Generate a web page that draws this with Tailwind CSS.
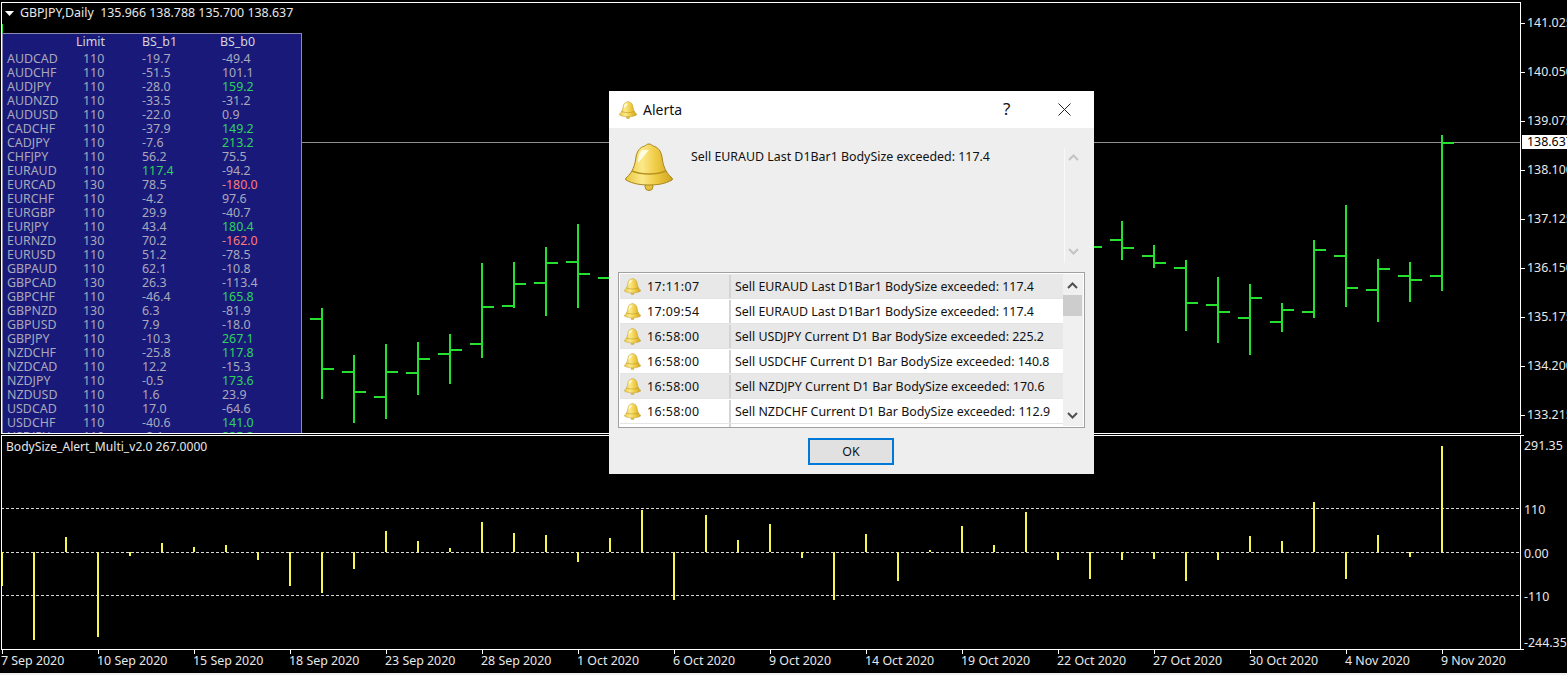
<!DOCTYPE html>
<html lang="en">
<head>
    <meta charset="UTF-8">
    <title>GBPJPY,Daily</title>
    <script src="https://cdn.jsdelivr.net/npm/@tailwindcss/browser@4"></script>
</head>
<body class="bg-black">
<div class="relative flex h-[675px] w-[1567px] flex-col overflow-hidden bg-black pt-[2px] font-['Noto_Sans',sans-serif] text-[12.4px] leading-[14px] text-[#e8e8e8]">

    <!-- bars and level lines, drawn in page coordinates -->
    <svg class="absolute left-0 top-0" width="1567" height="675" viewBox="0 0 1567 675" fill="none" shape-rendering="crispEdges">
        <path d="M302 142.5H1521" stroke="#8f8f8f"/>
        <path d="M1 508.5H1520M1 552.5H1520M1 595.5H1520" stroke="#d8d8d8" stroke-dasharray="3 2"/>
        <path stroke="#25e02f" stroke-width="2" d="M2 24V33
            M322 308V399M310 319H322M322 369H334
            M354 355V423M342 372H354M354 392H366
            M386 344V419M374 397H386M386 372H398
            M418 342V395M406 373H418M418 359H430
            M450 334V384M438 354H450M450 350H462
            M482 263V358M470 344H482M482 307H494
            M514 262V308M502 306H514M514 284H526
            M546 247V316M534 283H546M546 263H558
            M578 224V308M566 262H578M578 274H590
            M598 278H610
            M1090 247H1102
            M1122 221V260M1110 240H1122M1122 248H1134
            M1154 245V268M1142 256H1154M1154 263H1166
            M1186 260V331M1174 268H1186M1186 303H1198
            M1218 277V343M1206 305H1218M1218 312H1230
            M1250 284V355M1238 318H1250M1250 298H1262
            M1282 303V332M1270 322H1282M1282 310H1294
            M1314 240V318M1302 312H1314M1314 250H1326
            M1346 205V307M1334 256H1346M1346 288H1358
            M1378 259V322M1366 290H1378M1378 269H1390
            M1410 262V302M1398 276H1410M1410 280H1422
            M1442 135V291M1430 276H1442M1442 143H1454"/>
        <path stroke="#f5f54a" stroke-width="2" d="M2 552V586M34 552V640M66 552V537M98 552V637M130 552V556M162 552V543M194 552V547M226 552V545
            M258 552V560M290 552V586M322 552V593M354 552V569M386 552V531M418 552V541M450 552V548M482 552V522M514 552V533
            M546 552V535M578 552V562M610 552V538M642 552V510M674 552V600M706 552V515M738 552V540M770 552V524M802 552V558
            M834 552V600M866 552V534M898 552V581M930 552V550M962 552V526M994 552V545M1026 552V512
            M1058 552V560M1090 552V579M1122 552V560M1154 552V559M1186 552V581M1218 552V560M1250 552V536M1282 552V541
            M1314 552V502M1346 552V579M1378 552V535M1410 552V557M1442 552V446"/>
    </svg>

    <!-- price chart pane -->
    <div class="relative flex h-[432px] pl-px">
        <div class="relative h-full w-[1520px] border border-white">
            <div class="flex items-center gap-[6px] pl-[3px] pt-[3px]">
                <svg width="9" height="5" viewBox="0 0 9 5"><path d="M0 0H9L4.5 5Z" fill="#fff"/></svg>
                <span class="whitespace-pre">GBPJPY,Daily  135.966 138.788 135.700 138.637</span>
            </div>

            <!-- symbol table -->
            <div class="absolute bottom-0 left-0 top-[30px] w-[300px] overflow-hidden border-x border-t border-[#8a8ab0] bg-[#19197a] pl-[4px] pt-px text-[#a9a9bb]">
                <div class="mb-[3px] grid grid-cols-[76px_59px_80px_1fr] text-[#d4d4dc]">
                    <span></span><span class="-ml-[7px]">Limit</span><span>BS_b1</span><span class="-ml-[2px]">BS_b0</span>
                </div>
                <div class="grid grid-cols-[76px_59px_80px_1fr] auto-rows-[14px]">
                    <span>AUDCAD</span><span>110</span><span>-19.7</span><span>-49.4</span>
                    <span>AUDCHF</span><span>110</span><span>-51.5</span><span>101.1</span>
                    <span>AUDJPY</span><span>110</span><span>-28.0</span><span class="text-[#2fd35a]">159.2</span>
                    <span>AUDNZD</span><span>110</span><span>-33.5</span><span>-31.2</span>
                    <span>AUDUSD</span><span>110</span><span>-22.0</span><span>0.9</span>
                    <span>CADCHF</span><span>110</span><span>-37.9</span><span class="text-[#2fd35a]">149.2</span>
                    <span>CADJPY</span><span>110</span><span>-7.6</span><span class="text-[#2fd35a]">213.2</span>
                    <span>CHFJPY</span><span>110</span><span>56.2</span><span>75.5</span>
                    <span>EURAUD</span><span>110</span><span class="text-[#2fd35a]">117.4</span><span>-94.2</span>
                    <span>EURCAD</span><span>130</span><span>78.5</span><span class="text-[#ff7b78]">-180.0</span>
                    <span>EURCHF</span><span>110</span><span>-4.2</span><span>97.6</span>
                    <span>EURGBP</span><span>110</span><span>29.9</span><span>-40.7</span>
                    <span>EURJPY</span><span>110</span><span>43.4</span><span class="text-[#2fd35a]">180.4</span>
                    <span>EURNZD</span><span>130</span><span>70.2</span><span class="text-[#ff7b78]">-162.0</span>
                    <span>EURUSD</span><span>110</span><span>51.2</span><span>-78.5</span>
                    <span>GBPAUD</span><span>110</span><span>62.1</span><span>-10.8</span>
                    <span>GBPCAD</span><span>130</span><span>26.3</span><span>-113.4</span>
                    <span>GBPCHF</span><span>110</span><span>-46.4</span><span class="text-[#2fd35a]">165.8</span>
                    <span>GBPNZD</span><span>130</span><span>6.3</span><span>-81.9</span>
                    <span>GBPUSD</span><span>110</span><span>7.9</span><span>-18.0</span>
                    <span>GBPJPY</span><span>110</span><span>-10.3</span><span class="text-[#2fd35a]">267.1</span>
                    <span>NZDCHF</span><span>110</span><span>-25.8</span><span class="text-[#2fd35a]">117.8</span>
                    <span>NZDCAD</span><span>110</span><span>12.2</span><span>-15.3</span>
                    <span>NZDJPY</span><span>110</span><span>-0.5</span><span class="text-[#2fd35a]">173.6</span>
                    <span>NZDUSD</span><span>110</span><span>1.6</span><span>23.9</span>
                    <span>USDCAD</span><span>110</span><span>17.0</span><span>-64.6</span>
                    <span>USDCHF</span><span>110</span><span>-40.6</span><span class="text-[#2fd35a]">141.0</span>
                    <span>USDJPY</span><span>110</span><span>-8.1</span><span class="text-[#2fd35a]">225.2</span>
                </div>
            </div>
        </div>

        <!-- price scale -->
        <div class="relative flex-1 overflow-hidden">
            <div class="flex flex-col gap-[35px] pt-[14px]">
                <div class="flex items-center gap-[2px]"><i class="h-px w-[4px] shrink-0 bg-white"></i><span>141.025</span></div>
                <div class="flex items-center gap-[2px]"><i class="h-px w-[4px] shrink-0 bg-white"></i><span>140.050</span></div>
                <div class="flex items-center gap-[2px]"><i class="h-px w-[4px] shrink-0 bg-white"></i><span>139.075</span></div>
                <div class="flex items-center gap-[2px]"><i class="h-px w-[4px] shrink-0 bg-white"></i><span>138.100</span></div>
                <div class="flex items-center gap-[2px]"><i class="h-px w-[4px] shrink-0 bg-white"></i><span>137.125</span></div>
                <div class="flex items-center gap-[2px]"><i class="h-px w-[4px] shrink-0 bg-white"></i><span>136.150</span></div>
                <div class="flex items-center gap-[2px]"><i class="h-px w-[4px] shrink-0 bg-white"></i><span>135.175</span></div>
                <div class="flex items-center gap-[2px]"><i class="h-px w-[4px] shrink-0 bg-white"></i><span>134.200</span></div>
                <div class="flex items-center gap-[2px]"><i class="h-px w-[4px] shrink-0 bg-white"></i><span>133.215</span></div>
            </div>
            <div class="absolute left-px top-[133px] h-[14px] w-[46px] bg-white pl-[5px] text-black">138.637</div>
        </div>
    </div>

    <!-- indicator pane -->
    <div class="relative mt-px flex h-[215px] pl-px">
        <div class="h-full w-[1520px] border border-white pl-[4px] pt-[4px] text-[12.1px]">BodySize_Alert_Multi_v2.0 267.0000</div>
        <div class="relative flex-1 whitespace-nowrap">
            <i class="absolute left-0 top-0 h-px w-[3px] bg-white"></i>
            <i class="absolute bottom-0 left-0 h-px w-[3px] bg-white"></i>
            <span class="absolute left-[3px] top-[4px]">291.35</span>
            <span class="absolute left-[3px] top-[68px]">110</span>
            <span class="absolute left-[3px] top-[112px]">0.00</span>
            <span class="absolute left-[3px] top-[155px]">-110</span>
            <span class="absolute left-[3px] top-[201px]">-244.35</span>
        </div>
    </div>

    <!-- time scale -->
    <div class="flex h-[23px] whitespace-nowrap pl-[2px]">
        <div class="w-[96px]"><div class="h-[4px] w-px bg-white"></div><div class="-ml-px">7 Sep 2020</div></div>
        <div class="w-[96px]"><div class="h-[4px] w-px bg-white"></div><div class="-ml-px">10 Sep 2020</div></div>
        <div class="w-[96px]"><div class="h-[4px] w-px bg-white"></div><div class="-ml-px">15 Sep 2020</div></div>
        <div class="w-[96px]"><div class="h-[4px] w-px bg-white"></div><div class="-ml-px">18 Sep 2020</div></div>
        <div class="w-[96px]"><div class="h-[4px] w-px bg-white"></div><div class="-ml-px">23 Sep 2020</div></div>
        <div class="w-[96px]"><div class="h-[4px] w-px bg-white"></div><div class="-ml-px">28 Sep 2020</div></div>
        <div class="w-[96px]"><div class="h-[4px] w-px bg-white"></div><div class="-ml-px">1 Oct 2020</div></div>
        <div class="w-[96px]"><div class="h-[4px] w-px bg-white"></div><div class="-ml-px">6 Oct 2020</div></div>
        <div class="w-[96px]"><div class="h-[4px] w-px bg-white"></div><div class="-ml-px">9 Oct 2020</div></div>
        <div class="w-[96px]"><div class="h-[4px] w-px bg-white"></div><div class="-ml-px">14 Oct 2020</div></div>
        <div class="w-[96px]"><div class="h-[4px] w-px bg-white"></div><div class="-ml-px">19 Oct 2020</div></div>
        <div class="w-[96px]"><div class="h-[4px] w-px bg-white"></div><div class="-ml-px">22 Oct 2020</div></div>
        <div class="w-[96px]"><div class="h-[4px] w-px bg-white"></div><div class="-ml-px">27 Oct 2020</div></div>
        <div class="w-[96px]"><div class="h-[4px] w-px bg-white"></div><div class="-ml-px">30 Oct 2020</div></div>
        <div class="w-[96px]"><div class="h-[4px] w-px bg-white"></div><div class="-ml-px">4 Nov 2020</div></div>
        <div class="w-[96px]"><div class="h-[4px] w-px bg-white"></div><div class="-ml-px">9 Nov 2020</div></div>
    </div>
    <div class="h-[2px] bg-[#f0f0f0]"></div>

    <!-- bell used by the dialog -->
    <svg class="absolute h-0 w-0">
        <defs>
            <linearGradient id="gold" x1="0" x2="1" y1="0" y2="0">
                <stop offset="0" stop-color="#e9c53a"/>
                <stop offset="0.35" stop-color="#fbe98a"/>
                <stop offset="0.65" stop-color="#efcb45"/>
                <stop offset="1" stop-color="#cfa41c"/>
            </linearGradient>
        </defs>
        <symbol id="bell" viewBox="0 0 48 48">
            <circle cx="24" cy="43.5" r="4" fill="#e6c13a" stroke="#a8861c"/>
            <path d="M24 1C26 1 27 2 28 3C33 4 36 8 37 14C38 22 40 29 47 35Q48 36 47 37C40 41 32 42 24 42C16 42 8 41 1 37Q0 36 1 35C8 29 10 22 11 14C12 8 15 4 20 3C21 2 22 1 24 1Z" fill="url(#gold)" stroke="#a8861c"/>
            <path d="M7 28C16 32 32 32 41 28" stroke="#b8941f" stroke-width="1.5" fill="none"/>
            <path d="M17 7C14 10 13 14 13 20L24 7Z" fill="#fffbe0"/>
        </symbol>
    </svg>

    <!-- alert dialog -->
    <div class="absolute left-[609px] top-[91px] flex h-[383px] w-[485px] flex-col bg-[#eeeeee] text-[#111111]">
        <div class="relative flex h-[37px] shrink-0 items-center bg-white pl-[10px]">
            <svg class="h-[18px] w-[18px]"><use href="#bell"/></svg>
            <span class="ml-[6px] text-[14px]">Alerta</span>
            <span class="absolute left-[394px] top-[8px] text-[17px] leading-[20px]">?</span>
            <svg class="absolute left-[449px] top-[12px]" width="13" height="13" viewBox="0 0 13 13"><path d="M.5.5L12.5 12.5M12.5.5L.5 12.5" stroke="#222"/></svg>
        </div>

        <div class="relative flex h-[144px] shrink-0 pl-[16px] pt-[15px]">
            <svg class="h-[48px] w-[48px]"><use href="#bell"/></svg>
            <span class="ml-[18px] mt-[7px]">Sell EURAUD Last D1Bar1 BodySize exceeded: 117.4</span>
            <div class="absolute bottom-[9px] left-[455px] top-[20px] w-px bg-[#f9f9f9]"></div>
            <svg class="absolute left-[459px] top-[26px]" width="11" height="7" viewBox="0 0 11 7"><path d="M1 6L5.5 1.5L10 6" stroke="#c4c4c4" stroke-width="2" fill="none"/></svg>
            <svg class="absolute left-[459px] top-[120px]" width="11" height="7" viewBox="0 0 11 7"><path d="M1 1L5.5 5.5L10 1" stroke="#c4c4c4" stroke-width="2" fill="none"/></svg>
        </div>

        <div class="relative mx-[9px] flex h-[156px] shrink-0 overflow-hidden border border-[#a0a0a0] bg-white p-px">
            <div class="w-[443px] shrink-0">
                <div class="flex h-[25px] items-center border-b border-[#e4e4e4] bg-[#e8e8e8] pt-px"><svg class="ml-[4px] h-[17px] w-[17px] shrink-0"><use href="#bell"/></svg><span class="ml-[6px] w-[82px] tracking-[0.4px]">17:11:07</span><span class="flex h-full items-center border-l-2 border-[#d4d4d4] pl-[4px]">Sell EURAUD Last D1Bar1 BodySize exceeded: 117.4</span></div>
                <div class="flex h-[25px] items-center border-b border-[#e4e4e4] bg-white pt-px"><svg class="ml-[4px] h-[17px] w-[17px] shrink-0"><use href="#bell"/></svg><span class="ml-[6px] w-[82px] tracking-[0.4px]">17:09:54</span><span class="flex h-full items-center border-l-2 border-[#d4d4d4] pl-[4px]">Sell EURAUD Last D1Bar1 BodySize exceeded: 117.4</span></div>
                <div class="flex h-[25px] items-center border-b border-[#e4e4e4] bg-[#e8e8e8] pt-px"><svg class="ml-[4px] h-[17px] w-[17px] shrink-0"><use href="#bell"/></svg><span class="ml-[6px] w-[82px] tracking-[0.4px]">16:58:00</span><span class="flex h-full items-center border-l-2 border-[#d4d4d4] pl-[4px]">Sell USDJPY Current D1 Bar BodySize exceeded: 225.2</span></div>
                <div class="flex h-[25px] items-center border-b border-[#e4e4e4] bg-white pt-px"><svg class="ml-[4px] h-[17px] w-[17px] shrink-0"><use href="#bell"/></svg><span class="ml-[6px] w-[82px] tracking-[0.4px]">16:58:00</span><span class="flex h-full items-center border-l-2 border-[#d4d4d4] pl-[4px]">Sell USDCHF Current D1 Bar BodySize exceeded: 140.8</span></div>
                <div class="flex h-[25px] items-center border-b border-[#e4e4e4] bg-[#e8e8e8] pt-px"><svg class="ml-[4px] h-[17px] w-[17px] shrink-0"><use href="#bell"/></svg><span class="ml-[6px] w-[82px] tracking-[0.4px]">16:58:00</span><span class="flex h-full items-center border-l-2 border-[#d4d4d4] pl-[4px]">Sell NZDJPY Current D1 Bar BodySize exceeded: 170.6</span></div>
                <div class="flex h-[25px] items-center border-b border-[#e4e4e4] bg-white pt-px"><svg class="ml-[4px] h-[17px] w-[17px] shrink-0"><use href="#bell"/></svg><span class="ml-[6px] w-[82px] tracking-[0.4px]">16:58:00</span><span class="flex h-full items-center border-l-2 border-[#d4d4d4] pl-[4px]">Sell NZDCHF Current D1 Bar BodySize exceeded: 112.9</span></div>
                <div class="flex h-[25px] border-b border-[#e4e4e4] bg-white"><span class="ml-[109px] border-l-2 border-[#d4d4d4]"></span></div>
            </div>
            <!-- list scrollbar -->
            <div class="relative flex-1 bg-[#f0f0f0]">
                <div class="absolute left-0 top-[21px] h-[21px] w-[19px] bg-[#cdcdcd]"></div>
                <svg class="absolute left-[4px] top-[8px]" width="11" height="7" viewBox="0 0 11 7"><path d="M1 6L5.5 1.5L10 6" stroke="#505050" stroke-width="2" fill="none"/></svg>
                <svg class="absolute left-[4px] top-[138px]" width="11" height="7" viewBox="0 0 11 7"><path d="M1 1L5.5 5.5L10 1" stroke="#505050" stroke-width="2" fill="none"/></svg>
            </div>
        </div>

        <div class="flex flex-1 justify-center pr-[2px] pt-[10px]">
            <button class="h-[27px] w-[86px] border-2 border-[#0078d7] bg-[#e1e1e1] pl-px text-[12.4px]">OK</button>
        </div>
    </div>
</div>
</body>
</html>
